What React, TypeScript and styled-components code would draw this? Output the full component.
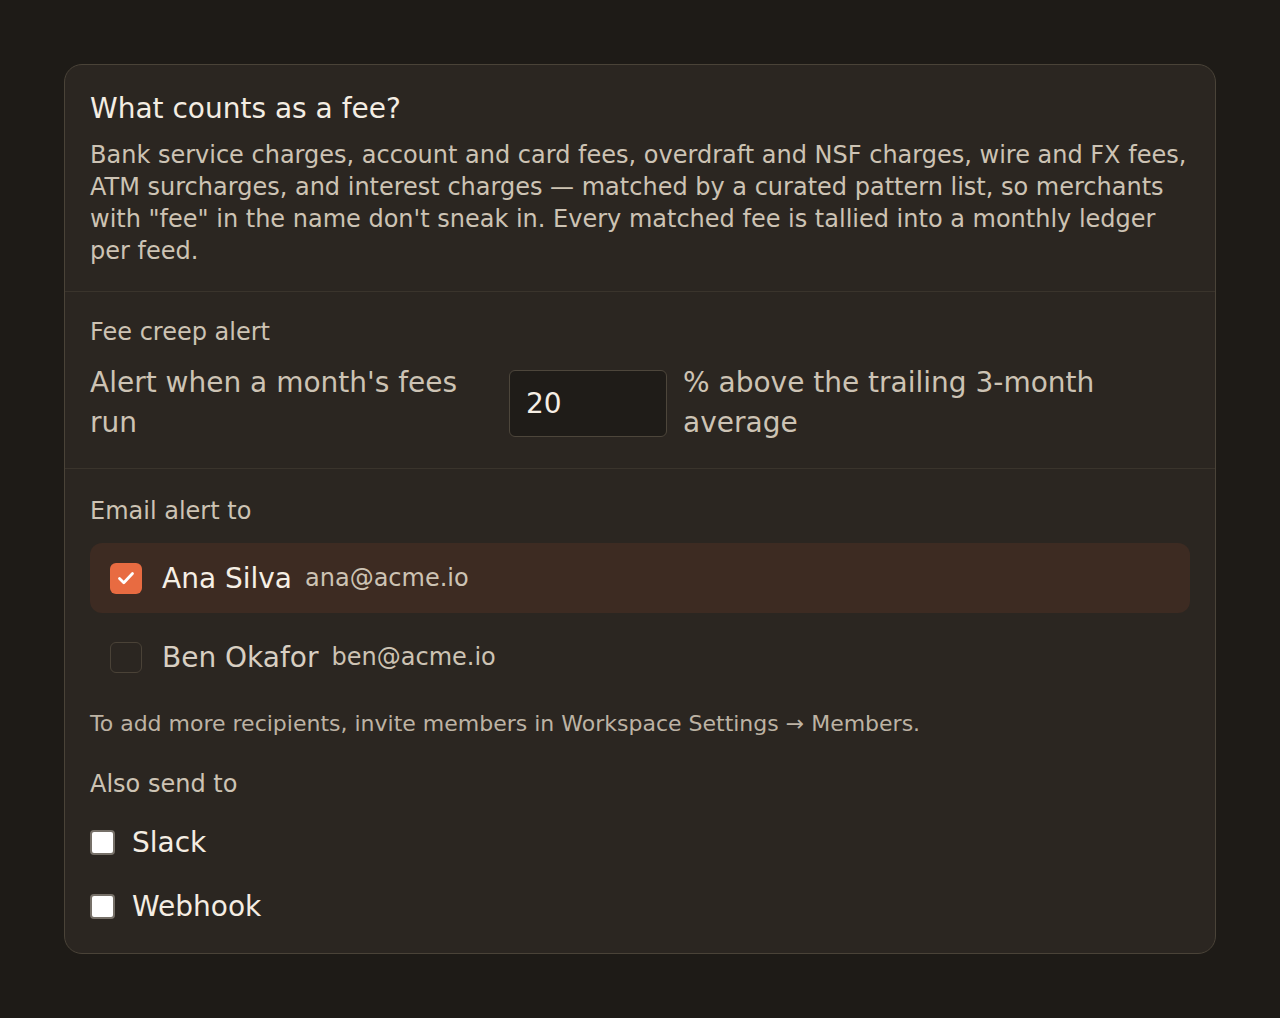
import React, { useState } from 'react';
import styled, { createGlobalStyle } from 'styled-components';

const GlobalStyle = createGlobalStyle`
  html, body {
    margin: 0;
    padding: 0;
    background: #1e1b17;
  }
  body {
    font-family: 'DejaVu Sans', 'Noto Sans', sans-serif;
    color: #ece4d8;
  }
`;

const Page = styled.div`
  min-height: 100vh;
  box-sizing: border-box;
  padding: 64px 64px;
`;

const Card = styled.div`
  background: #2b2621;
  border: 1px solid #4a4338;
  border-radius: 18px;
  overflow: hidden;
`;

const Section = styled.section<{ $top?: number; $bottom?: number }>`
  padding: ${({ $top }) => $top ?? 24}px 25px ${({ $bottom }) => $bottom ?? 24}px;
  & + & {
    border-top: 1px solid #3a342c;
  }
`;

const Title = styled.h2`
  margin: 0;
  font-size: 28px;
  line-height: 36px;
  font-weight: 400;
  color: #f4ede3;
`;

const Body = styled.p`
  margin: 12px 0 0;
  font-size: 24px;
  line-height: 32px;
  color: #cdc3b4;
`;

const Label = styled.div<{ $gap?: number }>`
  font-size: 24px;
  line-height: 32px;
  color: #cdc3b4;
  margin-bottom: ${({ $gap }) => $gap ?? 15}px;
`;

const ThresholdRow = styled.div`
  display: grid;
  grid-template-columns: 403px 158px 1fr;
  gap: 16px;
  align-items: center;
`;

const RowText = styled.div`
  font-size: 28px;
  line-height: 40px;
  color: #cdc3b4;
`;

const NumberInput = styled.input`
  box-sizing: border-box;
  width: 158px;
  height: 67px;
  background: #1f1c18;
  border: 1px solid #4d463b;
  border-radius: 6px;
  color: #f6efe5;
  font-family: inherit;
  font-size: 28px;
  padding: 0 16px;
  outline: none;
`;

const Recipients = styled.div`
  display: flex;
  flex-direction: column;
  gap: 9px;
`;

const Recipient = styled.label<{ $checked: boolean }>`
  display: flex;
  align-items: center;
  height: 70px;
  padding: 0 20px;
  border-radius: 12px;
  background: ${({ $checked }) => ($checked ? '#3d2b22' : 'transparent')};
  cursor: pointer;
`;

const Box = styled.span<{ $checked: boolean }>`
  box-sizing: border-box;
  width: 32px;
  height: 31px;
  border-radius: 6px;
  display: flex;
  align-items: center;
  justify-content: center;
  flex-shrink: 0;
  background: ${({ $checked }) => ($checked ? '#e86b41' : 'transparent')};
  border: ${({ $checked }) => ($checked ? 'none' : '1px solid #4a4237')};
`;

const Name = styled.span<{ $checked: boolean }>`
  margin-left: 20px;
  font-size: 28px;
  color: ${({ $checked }) => ($checked ? '#f6efe5' : '#d8cfc2')};
`;

const Email = styled.span`
  margin-left: 13px;
  font-size: 24px;
  color: #cdc3b4;
`;

const Hint = styled.p`
  margin: 16px 0 0;
  font-size: 22px;
  line-height: 32px;
  color: #bdb3a4;
`;

const AlsoLabel = styled(Label)`
  margin-top: 28px;
`;

const Channels = styled.div`
  display: flex;
  flex-direction: column;
  gap: 18px;
`;

const Channel = styled.label`
  display: flex;
  align-items: center;
  height: 46px;
  cursor: pointer;
`;

const NativeBox = styled.span<{ $checked: boolean }>`
  box-sizing: border-box;
  width: 25px;
  height: 25px;
  border-radius: 4px;
  border: 2px solid #767068;
  background: ${({ $checked }) => ($checked ? '#e86b41' : '#ffffff')};
  flex-shrink: 0;
`;

const ChannelName = styled.span`
  margin-left: 17px;
  font-size: 28px;
  color: #f4ede3;
`;

const Check = () => (
  <svg width="22" height="22" viewBox="0 0 22 22" fill="none">
    <path d="M4.5 11.5l4.3 4.3 8.7-9.3" stroke="#fff" strokeWidth="2.8" strokeLinecap="round" strokeLinejoin="round" />
  </svg>
);

const people = [
  { name: 'Ana Silva', email: 'ana@acme.io' },
  { name: 'Ben Okafor', email: 'ben@acme.io' },
];

export default function App() {
  const [threshold, setThreshold] = useState('20');
  const [selected, setSelected] = useState<Record<string, boolean>>({ 'ana@acme.io': true });
  const [channels, setChannels] = useState<Record<string, boolean>>({});

  return (
    <>
      <GlobalStyle />
      <Page>
        <Card>
          <Section $top={26}>
            <Title>What counts as a fee?</Title>
            <Body>
              Bank service charges, account and card fees, overdraft and NSF charges, wire and FX fees, ATM
              surcharges, and interest charges — matched by a curated pattern list, so merchants with "fee" in
              the name don't sneak in. Every matched fee is tallied into a monthly ledger per feed.
            </Body>
          </Section>
          <Section $bottom={25}>
            <Label>Fee creep alert</Label>
            <ThresholdRow>
              <RowText>Alert when a month's fees run</RowText>
              <NumberInput value={threshold} onChange={e => setThreshold(e.target.value)} />
              <RowText>% above the trailing 3-month average</RowText>
            </ThresholdRow>
          </Section>
          <Section $top={26}>
            <Label $gap={16}>Email alert to</Label>
            <Recipients>
              {people.map(p => {
                const on = !!selected[p.email];
                return (
                  <Recipient
                    key={p.email}
                    $checked={on}
                    onClick={() => setSelected(s => ({ ...s, [p.email]: !on }))}
                  >
                    <Box $checked={on}>{on && <Check />}</Box>
                    <Name $checked={on}>{p.name}</Name>
                    <Email>{p.email}</Email>
                  </Recipient>
                );
              })}
            </Recipients>
            <Hint>To add more recipients, invite members in Workspace Settings → Members.</Hint>
            <AlsoLabel $gap={19}>Also send to</AlsoLabel>
            <Channels>
              {['Slack', 'Webhook'].map(c => (
                <Channel key={c} onClick={() => setChannels(s => ({ ...s, [c]: !s[c] }))}>
                  <NativeBox $checked={!!channels[c]} />
                  <ChannelName>{c}</ChannelName>
                </Channel>
              ))}
            </Channels>
          </Section>
        </Card>
      </Page>
    </>
  );
}
